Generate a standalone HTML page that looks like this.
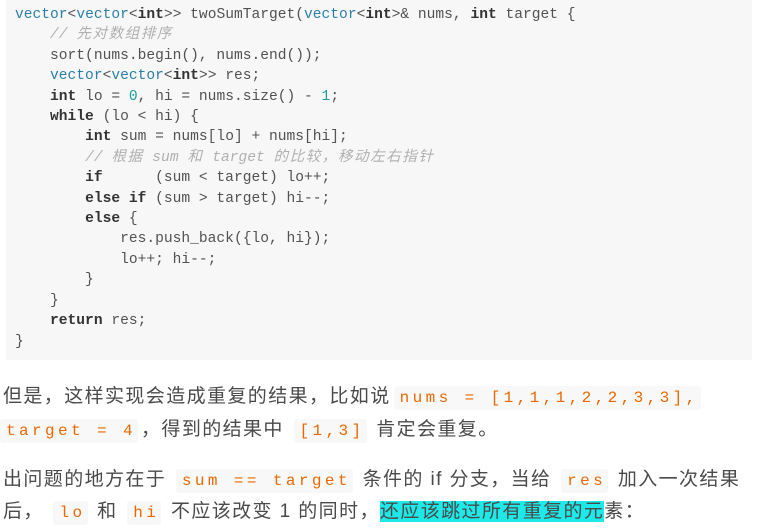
<!DOCTYPE html>
<html><head><meta charset="utf-8"><style>
body{margin:0;background:#fff;width:757px;height:529px;overflow:hidden;position:relative}
pre{position:absolute;left:6px;top:0;width:746px;height:360px;margin:0;background:#f7f7f7;font-family:"Liberation Mono",monospace;font-size:14.6px;line-height:20.4px;color:#525252;padding:5px 0 0 9px;box-sizing:border-box}
.t{color:#2b7fa6}.k{font-weight:bold;color:#333}.c{color:#b0b0b0;font-style:italic}.c i{font-style:italic;letter-spacing:1.5px}.n{color:#1f9c9c}
.p{position:absolute;left:3px;font-family:"Liberation Sans","Noto Sans CJK SC",sans-serif;font-size:19px;letter-spacing:1.4px;color:#4a4a4a;white-space:nowrap;line-height:24px}
code{font-family:"Liberation Mono",monospace;font-size:16px;letter-spacing:3.4px;color:#e96900;background:#f8f8f8;padding:3px 2px 3px 6px;border-radius:3px;margin:0 3px}
.hl{background:#1de9e9}
</style></head><body>
<pre><span class="t">vector</span>&lt;<span class="t">vector</span>&lt;<span class="k">int</span>&gt;&gt; twoSumTarget(<span class="t">vector</span>&lt;<span class="k">int</span>&gt;&amp; nums, <span class="k">int</span> target {
    <span class="c">// <i>先对数组排序</i></span>
    sort(nums.begin(), nums.end());
    <span class="t">vector</span>&lt;<span class="t">vector</span>&lt;<span class="k">int</span>&gt;&gt; res;
    <span class="k">int</span> lo = <span class="n">0</span>, hi = nums.size() - <span class="n">1</span>;
    <span class="k">while</span> (lo &lt; hi) {
        <span class="k">int</span> sum = nums[lo] + nums[hi];
        <span class="c">// <i>根据</i> sum <i>和</i> target <i>的比较，移动左右指针</i></span>
        <span class="k">if</span>      (sum &lt; target) lo++;
        <span class="k">else if</span> (sum &gt; target) hi--;
        <span class="k">else</span> {
            res.push_back({lo, hi});
            lo++; hi--;
        }
    }
    <span class="k">return</span> res;
}</pre>
<div class="p" style="top:385px">但是，这样实现会造成重复的结果，比如说<code>nums = [1,1,1,2,2,3,3],</code></div>
<div class="p" style="top:418px;left:0"><code style="margin-left:0">target = 4</code>，得到的结果中 <code>[1,3]</code> 肯定会重复。</div>
<div class="p" style="top:468px">出问题的地方在于 <code>sum == target</code> 条件的 if 分支，当给 <code>res</code> 加入一次结果</div>
<div class="p" style="top:500px">后， <code>lo</code> 和 <code>hi</code> 不应该改变 1 的同时，<span class="hl">还应该跳过所有重复的元</span>素：</div>
</body></html>
